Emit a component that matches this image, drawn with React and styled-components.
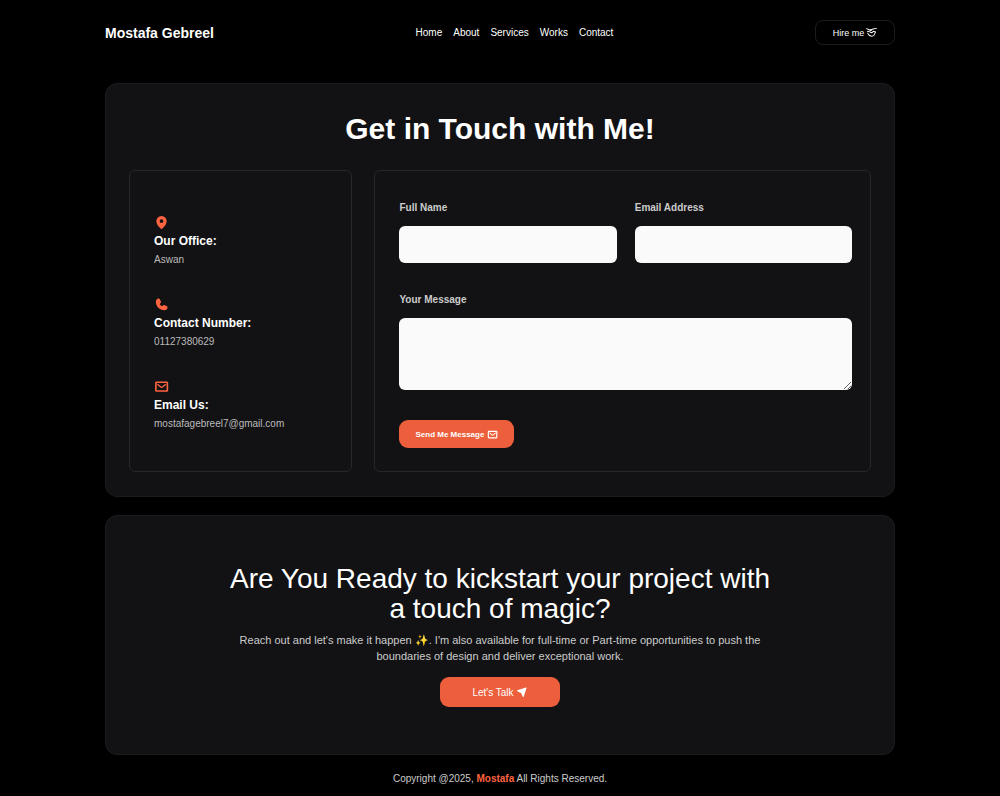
import React from 'react';
import styled, { createGlobalStyle } from 'styled-components';
import { PiMapPinFill, PiPhoneFill } from 'react-icons/pi';
import { BiSolidNavigation } from 'react-icons/bi';

const GlobalStyle = createGlobalStyle`
    * {
        box-sizing: border-box;
        margin: 0;
        padding: 0;
    }

    body {
        background: #000;
        color: #fff;
        font-family: "Liberation Sans", Arial, sans-serif;
        font-size: 10px;
    }

    a {
        color: inherit;
        text-decoration: none;
    }
`

const Page = styled.div`
    width: 79%;
    margin: 0 auto;
`

const Header = styled.header`
    display: flex;
    justify-content: space-between;
    align-items: center;
    padding: 20px 0 38px;
`

const Logo = styled.a`
    font-size: 14px;
    font-weight: bold;
`

const Nav = styled.nav`
    display: flex;
    gap: 11px;
`

const HireButton = styled.button`
    display: flex;
    justify-content: center;
    align-items: center;
    gap: 2px;
    width: 80px;
    height: 25px;
    border: 1px solid #1c1c1e;
    border-radius: 8px;
    background: #000;
    color: #fff;
    font-family: inherit;
    font-size: 9px;
    cursor: pointer;

    svg {
        font-size: 11px;
    }
`

const Section = styled.section`
    border: 1px solid #1c1c1e;
    border-radius: 12px;
    background: #121214;
    margin-bottom: 18px;
    padding: ${props => props.$tall ? "48px 24px 47px" : "28px 23px 24px"};
`

const Title = styled.h1`
    font-size: 30px;
    line-height: 34px;
    text-align: center;
    margin-bottom: 24px;
`

const Columns = styled.div`
    display: grid;
    grid-template-columns: 9fr 20fr;
    gap: 22px;
`

const InfoList = styled.div`
    display: flex;
    flex-direction: column;
    justify-content: center;
    gap: 29px;
    border: 1px solid #27272a;
    border-radius: 6px;
    padding: 28px 24px 24px;
`

const InfoIcon = styled.div`
    display: flex;
    height: 16px;
    color: #ff6340;
    font-size: 15px;
`

const InfoTitle = styled.h2`
    font-size: 12px;
    line-height: 20px;
`

const InfoText = styled.p`
    color: #bbb;
    line-height: 17px;
`

const Form = styled.form`
    display: grid;
    grid-template-columns: 1fr 1fr;
    column-gap: 18px;
    row-gap: 30px;
    border: 1px solid #27272a;
    border-radius: 6px;
    padding: 30px 18px 23px 24px;
`

const Field = styled.div`
    display: flex;
    flex-direction: column;
    gap: 12px;
    grid-column: ${props => props.$wide ? "1 / -1" : "auto"};
`

const Label = styled.label`
    color: #ccc;
    font-weight: bold;
    line-height: 13px;
`

const Input = styled.input`
    width: 100%;
    height: 37px;
    border: none;
    border-radius: 6px;
    background: #fafafa;
    padding: 0 12px;
`

const TextArea = styled.textarea`
    width: 100%;
    height: 72px;
    border: none;
    border-radius: 6px;
    background: #fafafa;
    padding: 12px;
`

const SubmitButton = styled.button`
    justify-self: start;
    display: flex;
    justify-content: center;
    align-items: center;
    gap: 3px;
    width: 115px;
    height: 28px;
    border: none;
    border-radius: 9px;
    background: #ec5e3c;
    color: #fff;
    font-family: inherit;
    font-size: 8px;
    font-weight: bold;
    cursor: pointer;

    svg {
        font-size: 11px;
    }
`

const Banner = styled.div`
    display: flex;
    flex-direction: column;
    align-items: center;
    text-align: center;
    max-width: 560px;
    margin: 0 auto;
`

const BannerTitle = styled.h2`
    font-size: 28px;
    font-weight: normal;
    line-height: 30px;
    margin-bottom: 8px;
`

const BannerText = styled.p`
    color: #ccc;
    font-size: 11px;
    line-height: 16px;
    margin-bottom: 13px;
`

const TalkLink = styled.a`
    display: flex;
    justify-content: center;
    align-items: center;
    gap: 2px;
    width: 120px;
    height: 30px;
    border-radius: 9px;
    background: #ec5e3c;

    svg {
        font-size: 12px;
    }
`

const Footer = styled.footer`
    color: #ccc;
    line-height: 12px;
    text-align: center;

    strong {
        color: #ff6340;
    }
`

const MailIcon = () => (
    <svg width="1em" height="1em" viewBox="0 0 24 24" fill="none" stroke="currentColor" strokeWidth="2.6" strokeLinejoin="round">
        <rect x="3" y="5.2" width="18.4" height="14" rx="1" />
        <path d="M5.5 8.5l4.8 4q1.9 1.4 3.8 0l4.8-4" strokeWidth="2.2" />
    </svg>
)

const HandshakeIcon = () => (
    <svg width="1em" height="1em" viewBox="0 0 24 24" fill="none" stroke="currentColor" strokeWidth="2.2" strokeLinecap="round" strokeLinejoin="round">
        <path d="M1.5 3.5l5 2.5h5l4-1.5 7-1.5" />
        <path d="M3 10.5l4-1 5-3M9 11.5l4 1 3-3 5 1.5" />
        <path d="M4 14c2 4 5 6 8.500 6 4 0 6.500-3 7.500-8" />
    </svg>
)

const links = ["Home", "About", "Services", "Works", "Contact"]

const contacts = [
    { title: "Our Office:", text: "Aswan", Icon: PiMapPinFill },
    { title: "Contact Number:", text: "01127380629", Icon: PiPhoneFill },
    { title: "Email Us:", text: "mostafagebreel7@gmail.com", Icon: MailIcon },
]

export default function App() {

    const handleSubmit = event => {
        event.preventDefault()
    }

    return (
        <>
            <GlobalStyle />
            <Page>
                <Header>
                    <Logo href="#home">Mostafa Gebreel</Logo>
                    <Nav>
                        {links.map(link => (
                            <a key={link} href={`#${link.toLowerCase()}`}>{link}</a>
                        ))}
                    </Nav>
                    <HireButton type="button">Hire me <HandshakeIcon /></HireButton>
                </Header>
                <Section id="contact">
                    <Title>Get in Touch with Me!</Title>
                    <Columns>
                        <InfoList>
                            {contacts.map(({ title, text, Icon }) => (
                                <div key={title}>
                                    <InfoIcon><Icon /></InfoIcon>
                                    <InfoTitle>{title}</InfoTitle>
                                    <InfoText>{text}</InfoText>
                                </div>
                            ))}
                        </InfoList>
                        <Form onSubmit={handleSubmit}>
                            <Field>
                                <Label htmlFor="name">Full Name</Label>
                                <Input id="name" type="text" />
                            </Field>
                            <Field>
                                <Label htmlFor="email">Email Address</Label>
                                <Input id="email" type="email" />
                            </Field>
                            <Field $wide>
                                <Label htmlFor="message">Your Message</Label>
                                <TextArea id="message" />
                            </Field>
                            <SubmitButton type="submit">Send Me Message <MailIcon /></SubmitButton>
                        </Form>
                    </Columns>
                </Section>
                <Section $tall>
                    <Banner>
                        <BannerTitle>Are You Ready to kickstart your project with a touch of magic?</BannerTitle>
                        <BannerText>
                            Reach out and let's make it happen ✨. I'm also available for full-time or Part-time opportunities to push the boundaries of design and deliver exceptional work.
                        </BannerText>
                        <TalkLink href="#contact">Let's Talk <BiSolidNavigation /></TalkLink>
                    </Banner>
                </Section>
                <Footer>Copyright @2025, <strong>Mostafa</strong> All Rights Reserved.</Footer>
            </Page>
        </>
    )
}
